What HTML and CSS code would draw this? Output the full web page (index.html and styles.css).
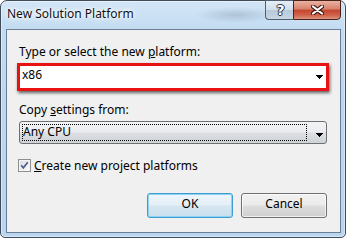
FILE: index.html
```html
<!DOCTYPE html>
<html>
<head>
<meta charset="utf-8">
<link rel="stylesheet" href="styles.css">
</head>
<body>
<div class="window">
  <div class="titlebar">
    <span class="title">New Solution Platform</span>
    <div class="caption">
      <div class="cbtn help">?</div>
      <div class="cbtn close">
        <svg width="13" height="10" viewBox="0 0 13 10">
          <path d="M2 1.5L11 8.5M11 1.5L2 8.5" stroke="#3d1a14" stroke-width="4.2" stroke-linecap="round"/>
          <path d="M2 1.5L11 8.5M11 1.5L2 8.5" stroke="#fff" stroke-width="2.2" stroke-linecap="round"/>
        </svg>
      </div>
    </div>
  </div>
  <div class="client">
    <div class="label">Type or select the new <u>p</u>latform:</div>
    <div class="highlight">
      <span class="value">x86</span>
      <svg class="arrow" width="7" height="4" viewBox="0 0 7 4"><path d="M0 0H7V1H6V2H5V3H4V4H3V3H2V2H1V1H0Z" fill="#000"/></svg>
    </div>
    <div class="label label2">Copy <u>s</u>ettings from:</div>
    <div class="combo">
      <span class="focus">Any CPU</span>
      <svg class="arrow arrow2" width="7" height="4" viewBox="0 0 7 4"><path d="M0 0H7V1H6V2H5V3H4V4H3V3H2V2H1V1H0Z" fill="#000"/></svg>
    </div>
    <div class="check">
      <span class="box">
        <svg width="11" height="11" viewBox="0 0 11 11"><path d="M2.2 5.2L4.3 7.8L8.8 2.2" stroke="#4c5f8c" stroke-width="1.7" fill="none"/></svg>
      </span>
      <span><u>C</u>reate new project platforms</span>
    </div>
    <div class="buttons">
      <button class="btn default">OK</button>
      <button class="btn">Cancel</button>
    </div>
  </div>
</div>
</body>
</html>
```
FILE: styles.css
```css
html, body {
  margin: 0;
  padding: 0;
}
body {
  width: 348px;
  height: 240px;
  overflow: hidden;
  background: #ffffff;
  font-family: "Noto Sans", "Open Sans", sans-serif;
  font-size: 12px;
  line-height: 15px;
  color: #000;
}
.window {
  box-sizing: border-box;
  width: 346px;
  height: 238px;
  border: 1px solid #3f4b58;
  border-radius: 7px 7px 5px 5px;
  padding: 0 4px 4px 5px;
  background:
    radial-gradient(ellipse 40px 8px at 235px 14px, rgba(120,140,160,0.35), rgba(120,140,160,0) 100%),
    linear-gradient(180deg, #d3e6f6 0%, #c3dcf2 12%, #bcd7f0 40%, #b9d5ef 100%);
  box-shadow: inset 0 0 0 1px rgba(255,255,255,0.45);
  display: flex;
  flex-direction: column;
}
.titlebar {
  height: 28px;
  display: flex;
  justify-content: space-between;
  align-items: flex-start;
  padding-left: 1px;
}
.title {
  margin-top: 5px;
  color: #111;
  text-shadow: 0 0 5px #fff, 0 0 3px #fff, 0 0 8px #fff;
}
.caption {
  display: flex;
  margin-top: -1px;
}
.cbtn {
  box-sizing: border-box;
  height: 20px;
  display: flex;
  align-items: center;
  justify-content: center;
}
.help {
  width: 28px;
  border: 1px solid #4f5f72;
  border-right: none;
  border-radius: 0 0 0 4px;
  background: linear-gradient(180deg, #e6eef6 0%, #d3dfea 48%, #b8c9da 52%, #c8d7e5 100%);
  color: #fff;
  font-family: "DejaVu Sans", sans-serif;
  font-weight: bold;
  font-size: 14px;
  line-height: 14px;
  text-shadow: 0 0 1px #2a3340, 1px 0 0 #2a3340, -1px 0 0 #2a3340, 0 1px 0 #2a3340, 0 -1px 0 #2a3340;
  padding-left: 2px;
}
.close {
  width: 48px;
  border: 1px solid #4a231b;
  border-radius: 0 0 4px 0;
  background: linear-gradient(180deg, #eab1a3 0%, #d9826c 44%, #c4472f 52%, #cf6148 78%, #dc9380 100%);
}
.close svg {
  display: block;
}
.client {
  flex: 1;
  border: 1px solid #6a7f96;
  background: #f0f0f0;
  padding: 14px 13px 0 12px;
  display: flex;
  flex-direction: column;
}
.label {
  height: 15px;
  white-space: nowrap;
}
.highlight {
  box-sizing: border-box;
  margin: 4px 0 0 -2px;
  width: 312px;
  height: 28px;
  border: 3px solid #e81212;
  box-shadow: 1px 2px 3px rgba(0,0,0,0.6);
  background: #fff;
  display: flex;
  justify-content: space-between;
  align-items: flex-start;
  padding: 1px 3px 0 2px;
}
.value {
  line-height: 15px;
}
.arrow {
  display: block;
  margin-top: 8px;
}
.label2 {
  margin-top: 11px;
}
.combo {
  box-sizing: border-box;
  margin-top: 4px;
  width: 308px;
  height: 23px;
  border: 1px solid #707070;
  border-radius: 3px;
  background: linear-gradient(180deg, #f3f4f6 0%, #eaecef 48%, #dcdfe3 52%, #cfd3d8 100%);
  display: flex;
  align-items: flex-start;
  justify-content: space-between;
  padding: 2px 3px 0 2px;
}
.focus {
  box-sizing: border-box;
  width: 285px;
  height: 17px;
  border: 1px dotted #000;
  line-height: 13px;
  padding-left: 0;
}
.arrow2 {
  margin-top: 9px;
}
.check {
  margin-top: 14px;
  height: 15px;
  display: flex;
  align-items: flex-start;
  margin-left: -1px;
  white-space: nowrap;
}
.box {
  box-sizing: border-box;
  width: 13px;
  height: 13px;
  margin-top: 1px;
  margin-right: 3px;
  border: 1px solid #8f8f8f;
  background: linear-gradient(135deg, #d6d9de 0%, #eef0f2 60%, #fbfbfb 100%);
  box-shadow: inset 0 0 0 1px #f4f4f4;
  display: flex;
  align-items: center;
  justify-content: center;
}
.box svg {
  display: block;
}
.buttons {
  margin-top: 20px;
  display: flex;
  justify-content: flex-end;
  gap: 8px;
}
.btn {
  box-sizing: border-box;
  width: 86px;
  height: 25px;
  margin: 0;
  padding: 0 0 4px 0;
  font-family: inherit;
  font-size: 12px;
  line-height: 15px;
  color: #000;
  border: 1px solid #707070;
  border-radius: 3px;
  background: linear-gradient(180deg, #f2f2f2 0%, #ebebeb 48%, #dddddd 52%, #cfcfcf 100%);
  box-shadow: inset 0 0 0 1px rgba(255,255,255,0.7);
}
.btn.default {
  border-color: #3c9dd0;
  background: linear-gradient(180deg, #eef6fb 0%, #e4eff7 48%, #d5e6f1 52%, #c9dfed 100%);
  box-shadow: inset 0 0 0 1px #8fd3f2;
}
```
